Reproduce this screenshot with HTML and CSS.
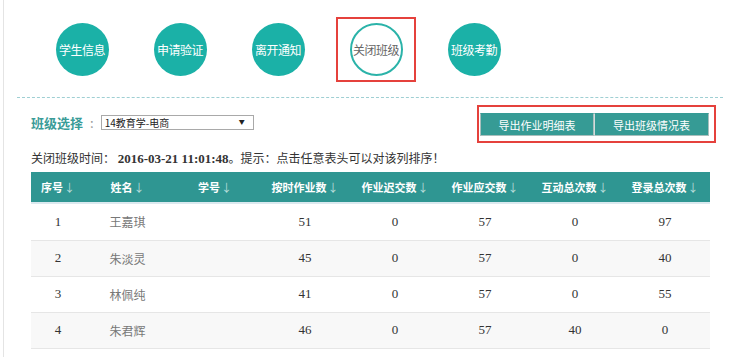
FILE: index.html
```html
<!DOCTYPE html>
<html lang="zh">
<head>
<meta charset="utf-8">
<title>关闭班级</title>
<link rel="stylesheet" href="styles.css">
</head>
<body>
<div class="page">
  <nav class="nav">
    <div class="nav-item"><span class="circle">学生信息</span></div>
    <div class="nav-item"><span class="circle">申请验证</span></div>
    <div class="nav-item"><span class="circle">离开通知</span></div>
    <div class="nav-item active"><span class="circle">关闭班级</span></div>
    <div class="nav-item"><span class="circle">班级考勤</span></div>
  </nav>
  <div class="divider"></div>
  <div class="toolbar">
    <div class="class-select">
      <span class="label">班级选择</span>
      <span class="colon">:</span>
      <div class="select"><span>14教育学-电商</span><span class="caret">▼</span></div>
    </div>
    <div class="btn-box">
      <button class="btn">导出作业明细表</button>
      <button class="btn">导出班级情况表</button>
    </div>
  </div>
  <p class="info">关闭班级时间： <b class="date">2016-03-21 11:01:48</b>。提示：点击任意表头可以对该列排序！</p>
  <table class="grid">
    <colgroup>
      <col class="c1"><col class="c2"><col class="c3"><col class="c4"><col class="c4"><col class="c4"><col class="c4"><col class="c4">
    </colgroup>
    <thead>
      <tr>
        <th>序号<i>↓</i></th><th>姓名<i>↓</i></th><th>学号<i>↓</i></th><th>按时作业数<i>↓</i></th><th>作业迟交数<i>↓</i></th><th>作业应交数<i>↓</i></th><th>互动总次数<i>↓</i></th><th>登录总次数<i>↓</i></th>
      </tr>
    </thead>
    <tbody>
      <tr class="first"><td class="num">1</td><td class="name">王嘉琪</td><td></td><td class="num">51</td><td class="num">0</td><td class="num">57</td><td class="num">0</td><td class="num">97</td></tr>
      <tr class="alt"><td class="num">2</td><td class="name">朱淡灵</td><td></td><td class="num">45</td><td class="num">0</td><td class="num">57</td><td class="num">0</td><td class="num">40</td></tr>
      <tr><td class="num">3</td><td class="name">林佩纯</td><td></td><td class="num">41</td><td class="num">0</td><td class="num">57</td><td class="num">0</td><td class="num">55</td></tr>
      <tr class="alt"><td class="num">4</td><td class="name">朱君辉</td><td></td><td class="num">46</td><td class="num">0</td><td class="num">57</td><td class="num">40</td><td class="num">0</td></tr>
    </tbody>
  </table>
</div>
</body>
</html>
```
FILE: styles.css
```css
* { box-sizing: border-box; }
html, body { margin: 0; padding: 0; background: #fff; }
body {
  font-family: "Noto Sans CJK SC", "Liberation Sans", sans-serif;
  color: #333;
  width: 738px;
  height: 357px;
  overflow: hidden;
}
.page {
  margin-left: 3px;
  border-left: 1px solid #e4e4e4;
  height: 357px;
  padding-top: 17px;
}
.nav {
  display: flex;
  gap: 18px;
  padding-left: 38px;
}
.nav-item {
  width: 80px;
  height: 65px;
  border: 2px solid transparent;
  display: flex;
  align-items: center;
  justify-content: center;
}
.nav-item.active { border-color: #e5413c; }
.circle {
  width: 53px;
  height: 53px;
  border-radius: 50%;
  background: #1bb1a7;
  color: #fff;
  font-size: 12px;
  display: flex;
  align-items: center;
  justify-content: center;
  white-space: nowrap;
  letter-spacing: -0.5px;
}
.active .circle {
  background: #fff;
  border: 2px solid #2bb3a9;
  color: #666;
}
.divider {
  margin: 15px 15px 0 13px;
  border-top: 1px dashed #9fcfd3;
}
.toolbar {
  display: flex;
  justify-content: space-between;
  align-items: center;
  margin-top: 7px;
  padding: 0 22px 0 27px;
}
.class-select {
  display: flex;
  align-items: center;
  margin-top: -4px;
}
.label {
  color: #3a9c98;
  font-size: 13px;
  font-weight: bold;
}
.colon {
  color: #999;
  font-size: 13px;
  margin: 0 7px 0 7px;
}
.select {
  width: 153px;
  height: 15px;
  border: 1px solid #a9a9a9;
  font-size: 10px;
  line-height: 13px;
  padding: 0 8px 0 3px;
  display: flex;
  justify-content: space-between;
  color: #222;
}
.caret { font-size: 6px; line-height: 12px; }
.btn-box {
  border: 2px solid #e5413c;
  padding: 6px 5px 5px 1px;
  display: flex;
}
.btn {
  height: 23px;
  width: 114px;
  background: #369b95;
  color: #fff;
  font-family: "Noto Sans CJK SC", sans-serif;
  font-size: 11px;
  border: 1px solid #a9bfbd;
  border-top-color: #369b95;
  padding: 0;
}
.btn + .btn { width: 115px; border-left-color: #d3dddc; }
.info {
  margin: 7px 0 0 27px;
  font-size: 12px;
  line-height: 16px;
  color: #333;
}
.date {
  font-family: "Liberation Serif", serif;
  font-size: 13px;
}
.grid {
  margin: 5px 0 0 27px;
  width: 679px;
  border-collapse: collapse;
  table-layout: fixed;
}
.c1 { width: 54px; }
.c2 { width: 85px; }
.c3 { width: 90px; }
.c4 { width: 90px; }
thead th {
  background: #2f9692;
  color: #fff;
  height: 31px;
  font-size: 11px;
  font-weight: bold;
  text-align: center;
  padding: 0;
  border-bottom: 2px solid #dbe9ef;
}
thead th i {
  font-style: normal;
  font-weight: normal;
  color: #b9dedb;
  margin-left: 1px;
}
tbody td {
  height: 36px;
  text-align: center;
  padding: 0;
  border-bottom: 1px solid #e6e6e6;
}
tbody tr.first td { height: 37px; }
tbody tr.alt td { background: #f8f8f8; }
.num {
  font-family: "Liberation Serif", serif;
  font-size: 13px;
  color: #333;
}
.name {
  font-size: 12px;
  color: #777;
}
```
